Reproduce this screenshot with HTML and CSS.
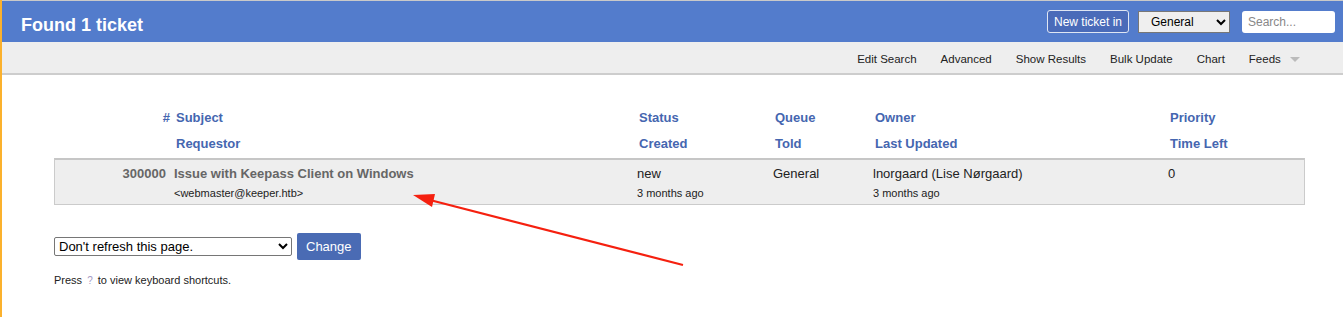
FILE: index.html
```html
<!DOCTYPE html>
<html lang="en">
<head>
  <meta charset="UTF-8" />
  <title>Found 1 ticket</title>
  <link rel="stylesheet" href="styles.css">
</head>
<body>
<div class="page">
  <header class="topbar">
    <h1>Found 1 ticket</h1>
    <div class="topbar-tools">
      <button class="new-ticket">New ticket in</button>
      <select class="queue-select"><option>General</option></select>
      <input class="search" type="text" placeholder="Search..." />
    </div>
  </header>

  <nav class="pagemenu">
    <a>Edit Search</a>
    <a>Advanced</a>
    <a>Show Results</a>
    <a>Bulk Update</a>
    <a>Chart</a>
    <a class="feeds">Feeds <span class="caret"></span></a>
  </nav>

  <main class="content">
    <div class="ticket-head">
      <div class="hcell id">#</div>
      <div class="hcell">Subject</div>
      <div class="hcell">Status</div>
      <div class="hcell">Queue</div>
      <div class="hcell">Owner</div>
      <div class="hcell">Priority</div>
      <div class="hcell"></div>
      <div class="hcell">Requestor</div>
      <div class="hcell">Created</div>
      <div class="hcell">Told</div>
      <div class="hcell">Last Updated</div>
      <div class="hcell">Time Left</div>
    </div>

    <div class="ticket-row">
      <div class="cell id">300000</div>
      <div class="cell subject">Issue with Keepass Client on Windows</div>
      <div class="cell">new</div>
      <div class="cell">General</div>
      <div class="cell">lnorgaard (Lise Nørgaard)</div>
      <div class="cell">0</div>
      <div class="cell small"></div>
      <div class="cell small">&lt;webmaster@keeper.htb&gt;</div>
      <div class="cell small">3 months ago</div>
      <div class="cell small"></div>
      <div class="cell small">3 months ago</div>
      <div class="cell small"></div>
    </div>

    <form class="refresh">
      <select class="refresh-select"><option>Don't refresh this page.</option></select>
      <button type="button" class="change-btn">Change</button>
    </form>

    <p class="shortcuts">Press <span class="key">?</span> to view keyboard shortcuts.</p>
  </main>
</div>

<svg class="arrow" width="1343" height="317" viewBox="0 0 1343 317">
  <line x1="683" y1="265" x2="426" y2="199" stroke="#f5200f" stroke-width="2.2" />
  <polygon points="413,195 435,194 432,207" fill="#f5200f" />
</svg>
</body>
</html>
```

FILE: styles.css
```css
body {
  margin: 0;
  font-family: "Liberation Sans", Arial, sans-serif;
  color: #222;
  background: #fff;
}
.page {
  border-left: 2px solid #fbb12d;
  min-height: 317px;
  box-sizing: border-box;
}
.topbar {
  display: flex;
  align-items: center;
  justify-content: space-between;
  height: 41px;
  border-top: 1px solid #c9c9c9;
  background: #537ccc;
  padding: 0 8px 0 19px;
}
.topbar h1 {
  margin: 0;
  padding-top: 7px;
  color: #fff;
  font-size: 18px;
  font-weight: 700;
}
.topbar-tools {
  display: flex;
  align-items: center;
}
.new-ticket {
  height: 23px;
  padding: 0 6px;
  margin-right: 9px;
  background: #4a6bb9;
  border: 1px solid #dfe6f3;
  border-radius: 3px;
  color: #fff;
  font-family: inherit;
  font-size: 12px;
}
.queue-select {
  width: 92px;
  height: 22px;
  margin-right: 12px;
  background: #efefef;
  border: 1px solid #777;
  font-family: inherit;
  font-size: 12px;
  padding-left: 8px;
}
.search {
  width: 93px;
  height: 22px;
  box-sizing: border-box;
  border: none;
  border-radius: 3px;
  padding: 0 6px;
  font-family: inherit;
  font-size: 12px;
}
.search::placeholder {
  color: #888;
}
.pagemenu {
  display: flex;
  justify-content: flex-end;
  align-items: center;
  gap: 24px;
  height: 29px;
  padding-top: 2px;
  padding-right: 43px;
  background: #eee;
  border-bottom: 2px solid #cdcdcd;
  font-size: 11.5px;
}
.pagemenu a {
  color: #222;
}
.caret {
  display: inline-block;
  margin-left: 6px;
  vertical-align: middle;
  border-left: 5px solid transparent;
  border-right: 5px solid transparent;
  border-top: 5px solid #bbb;
}
.content {
  padding: 30px 38px 0 52px;
}
.ticket-head,
.ticket-row {
  display: grid;
  grid-template-columns: 115px 463px 136px 100px 295px 1fr;
}
.ticket-head {
  margin-left: 1px;
  margin-right: 1px;
  margin-bottom: 1px;
}
.hcell {
  height: 26px;
  line-height: 26px;
  padding-left: 6px;
  font-size: 13px;
  font-weight: 700;
  color: #4566b0;
}
.hcell.id {
  padding-left: 0;
  text-align: right;
}
.ticket-row {
  background: #eee;
  border: 1px solid #cbcbcb;
  border-top: 2px solid #c6c6c6;
  padding: 4px 0 1px;
}
.cell {
  height: 20px;
  line-height: 20px;
  padding-left: 4px;
  font-size: 13px;
  white-space: nowrap;
}
.cell.small {
  height: 19px;
  line-height: 19px;
  font-size: 11px;
}
.cell.id {
  padding: 0 4px 0 0;
  text-align: right;
  font-weight: 700;
  color: #666;
}
.cell.subject {
  font-weight: 700;
  color: #666;
}
.refresh {
  display: flex;
  align-items: center;
  gap: 5px;
  margin-top: 28px;
}
.refresh-select {
  width: 238px;
  height: 19px;
  border: 1px solid #767676;
  border-radius: 2px;
  background: #fff;
  font-family: inherit;
  font-size: 13px;
  padding: 0;
}
.change-btn {
  height: 27px;
  padding: 0 9px;
  background: #4a6bb4;
  border: none;
  border-radius: 2px;
  color: #fff;
  font-family: inherit;
  font-size: 13px;
}
.shortcuts {
  margin: 14px 0 0;
  font-size: 11px;
}
.key {
  color: #a59ac4;
  font-size: 10px;
  margin: 0 2px;
}
.arrow {
  position: absolute;
  top: 0;
  left: 0;
  pointer-events: none;
}
```
